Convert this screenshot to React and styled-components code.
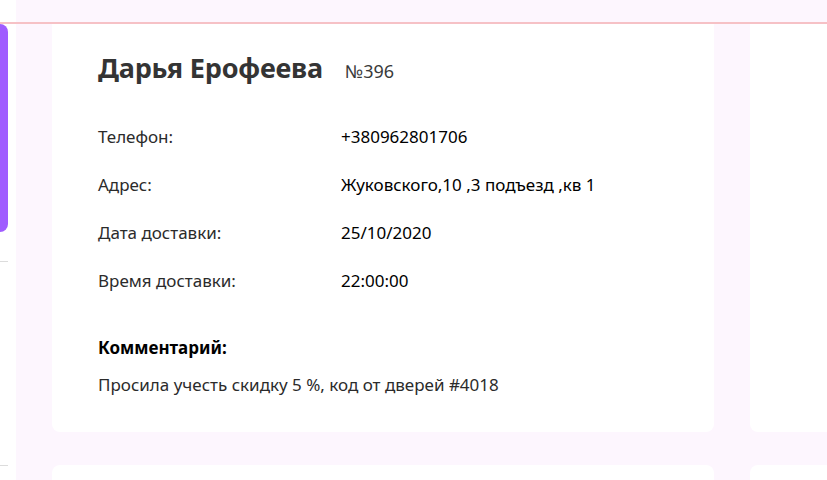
import React from 'react'
import styled, { createGlobalStyle } from 'styled-components'

const GlobalStyle = createGlobalStyle`
	html, body {
		margin: 0;
		padding: 0;
		width: 827px;
		height: 480px;
		overflow: hidden;
		background: #fff;
		font-family: 'Noto Sans', 'Open Sans', sans-serif;
	}
`

const Page = styled.div`
	display: flex;
	flex-direction: column;
	width: 827px;
	height: 480px;
	overflow: hidden;
`

const TopBar = styled.div`
	position: relative;
	z-index: 2;
	display: flex;
	height: 22px;
	flex-shrink: 0;
	border-bottom: 2px solid #f6c1c6;
	.topbar-side {
		width: 16px;
		background: #fff;
	}
	.topbar-main {
		flex: 1;
		background: #fdf6fe;
	}
`

const Body = styled.div`
	display: flex;
	flex: 1;
	min-height: 0;
`

const Sidebar = styled.div`
	width: 16px;
	flex-shrink: 0;
	display: flex;
	flex-direction: column;
	background: #fff;
`

const SideIndicator = styled.div`
	width: 8px;
	height: 208px;
	background: #a05cff;
	border-radius: 0 8px 8px 0;
`

const SideDivider = styled.div`
	width: 8px;
	height: 1px;
	background: #dcdcdc;
	margin-top: ${props => props.offset}px;
`

const Content = styled.div`
	flex: 1;
	background: #fdf6fe;
	padding-left: 36px;
	overflow: hidden;
`

const CardGrid = styled.div`
	display: grid;
	grid-template-columns: 662px 662px;
	column-gap: 36px;
	row-gap: 33px;
	margin-top: -13px;
`

const Card = styled.div`
	background: #fff;
	border-radius: 8px;
	min-height: ${props => props.minHeight || 0}px;
	padding: 38px 46px 0;
	box-sizing: border-box;
	color: #1e1e1e;
`

const CardHead = styled.div`
	display: flex;
	align-items: baseline;
	gap: 22px;
	margin-bottom: 26px;
	h2 {
		margin: 0;
		font-size: 27px;
		line-height: 37px;
		font-weight: 700;
		color: #343434;
		letter-spacing: -0.2px;
	}
	span {
		font-size: 18px;
		color: #3a3a3a;
	}
`

const InfoList = styled.div`
	display: grid;
	grid-template-columns: 243px 1fr;
	grid-auto-rows: 48px;
	align-items: center;
	font-size: 17px;
`

const Label = styled.div`
	color: #2b2b2b;
`

const Value = styled.div`
	color: #000;
`

const Comment = styled.div`
	margin-top: 32px;
	font-size: 17px;
	line-height: 23px;
	h4 {
		margin: 0 0 14px;
		font-size: 17px;
		font-weight: 700;
		color: #000;
	}
	p {
		margin: 0;
		color: #2b2b2b;
	}
`

const order = {
	name: 'Дарья Ерофеева',
	number: '№396',
	fields: [
		['Телефон:', '+380962801706'],
		['Адрес:', 'Жуковского,10 ,3 подъезд ,кв 1'],
		['Дата доставки:', '25/10/2020'],
		['Время доставки:', '22:00:00']
	],
	comment: 'Просила учесть скидку 5 %, код от дверей #4018'
}

const App = () => (
	<Page>
		<GlobalStyle />
		<TopBar>
			<div className="topbar-side" />
			<div className="topbar-main" />
		</TopBar>
		<Body>
			<Sidebar>
				<SideIndicator />
				<SideDivider offset={29} />
				<SideDivider offset={203} />
			</Sidebar>
			<Content>
				<CardGrid>
					<Card minHeight={421}>
						<CardHead>
							<h2>{order.name}</h2>
							<span>{order.number}</span>
						</CardHead>
						<InfoList>
							{order.fields.map(([label, value]) => (
								<React.Fragment key={label}>
									<Label>{label}</Label>
									<Value>{value}</Value>
								</React.Fragment>
							))}
						</InfoList>
						<Comment>
							<h4>Комментарий:</h4>
							<p>{order.comment}</p>
						</Comment>
					</Card>
					<Card minHeight={421} />
					<Card minHeight={421} />
					<Card minHeight={421} />
				</CardGrid>
			</Content>
		</Body>
	</Page>
)

export default App
